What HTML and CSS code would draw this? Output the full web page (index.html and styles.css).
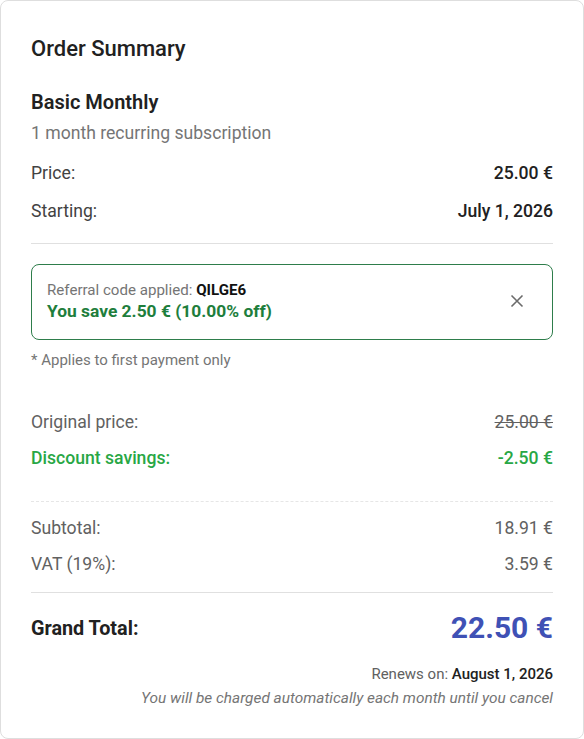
FILE: index.html
```html
<!DOCTYPE html>
<html>
<head>
    <meta charset="UTF-8">
    <title>Order Summary</title>
    <link rel="stylesheet" href="styles.css">
</head>
<body>
<div class="summary">
    <h2 class="title">Order Summary</h2>

    <div class="plan">
        <h3 class="plan-name">Basic Monthly</h3>
        <p class="plan-desc">1 month recurring subscription</p>
    </div>

    <div class="row">
        <span>Price:</span>
        <span class="strong">25.00 €</span>
    </div>
    <div class="row">
        <span>Starting:</span>
        <span class="strong">July 1, 2026</span>
    </div>

    <hr class="line">

    <div class="referral">
        <div class="referral-text">
            <p class="referral-code">Referral code applied: <b>QILGE6</b></p>
            <p class="referral-save">You save 2.50 € (10.00% off)</p>
        </div>
        <span class="referral-close">
            <svg width="14" height="14" viewBox="0 0 14 14"><path d="M1.5 1.5 L12.5 12.5 M12.5 1.5 L1.5 12.5" stroke="#6b6b6b" stroke-width="1.6" fill="none"/></svg>
        </span>
    </div>
    <p class="note">* Applies to first payment only</p>

    <div class="row small muted first">
        <span>Original price:</span>
        <span class="strike">25.00 €</span>
    </div>
    <div class="row small green">
        <span>Discount savings:</span>
        <span>-2.50 €</span>
    </div>

    <hr class="line dashed">

    <div class="row small muted">
        <span>Subtotal:</span>
        <span>18.91 €</span>
    </div>
    <div class="row small muted">
        <span>VAT (19%):</span>
        <span>3.59 €</span>
    </div>

    <hr class="line total-line">

    <div class="total">
        <span class="total-label">Grand Total:</span>
        <span class="total-value">22.50 €</span>
    </div>

    <p class="renew">Renews on: <b>August 1, 2026</b></p>
    <p class="auto">You will be charged automatically each month until you cancel</p>
</div>
</body>
</html>
```

FILE: styles.css
```css
body{margin:0;font-family: Roboto, "Liberation Sans", sans-serif;color:#212121;background:#fff;}
h2,h3,p{margin:0;}

.summary{
    box-sizing: border-box;
    width: 584px;
    height: 739px;
    padding: 31px 30px 30px;
    border: 1px solid #dedede;
    border-radius: 8px;
}
.title{
    font-size: 22px;
    font-weight: 500;
    line-height: 34px;
}
.plan{
    margin-top: 21px;
    margin-bottom: 8px;
}
.plan-name{
    font-size: 20px;
    font-weight: 600;
    line-height: 30px;
}
.plan-desc{
    font-size: 17.6px;
    color: #757575;
    line-height: 26px;
    margin-top: 3px;
}
.row{
    display: flex;
    justify-content: space-between;
    font-size: 17.6px;
    line-height: 24px;
    padding: 7px 0;
    color: #424242;
}
.row.small{
    padding: 6px 0;
}
.row .strong{
    color: #212121;
    font-weight: 500;
}
.line{
    border: 0;
    border-top: 1px solid #e0e0e0;
    margin: 13px 0 20px;
}
.line.dashed{
    border-top: 1px dashed #e6e6e6;
    margin: 25px 0 8px;
}
.line.total-line{
    margin: 10px 0 13px;
}
.referral{
    display: flex;
    align-items: center;
    justify-content: space-between;
    border: 1px solid #2e7d4b;
    border-radius: 8px;
    padding: 15px 28px 17px 15px;
}
.referral-code{
    font-size: 15.1px;
    color: #757575;
    line-height: 20px;
}
.referral-code b{
    color: #111;
    font-weight: 700;
}
.referral-save{
    font-size: 17.4px;
    font-weight: 700;
    color: #1e7e3c;
    line-height: 22px;
}
.referral-close{
    display: flex;
    cursor: pointer;
}
.note{
    font-size: 15px;
    color: #757575;
    line-height: 20px;
    margin-top: 10px;
}
.row.first{
    margin-top: 34px;
}
.row.muted{
    color: #616161;
}
.strike{
    text-decoration: line-through;
}
.row.green{
    color: #28a745;
    font-weight: 500;
}
.total{
    display: flex;
    justify-content: space-between;
    align-items: center;
}
.total-label{
    font-size: 19.8px;
    font-weight: 700;
    color: #212121;
}
.total-value{
    font-size: 30px;
    font-weight: 700;
    color: #3f51b5;
    line-height: 44px;
}
.renew{
    text-align: right;
    font-size: 15px;
    color: #616161;
    line-height: 20px;
    margin-top: 14px;
}
.renew b{
    color: #212121;
    font-weight: 500;
}
.auto{
    text-align: right;
    font-size: 15.4px;
    font-style: italic;
    color: #757575;
    line-height: 20px;
    margin-top: 4px;
}
```
